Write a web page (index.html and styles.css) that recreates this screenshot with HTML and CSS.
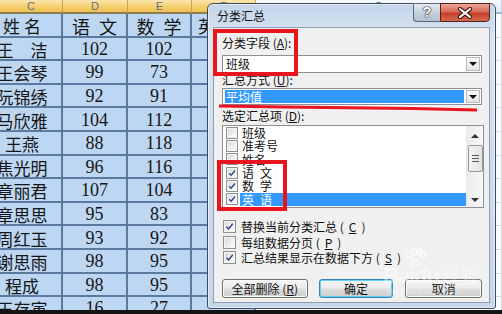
FILE: index.html
```html
<!DOCTYPE html>
<html>
<head>
<meta charset="utf-8">
<link rel="stylesheet" href="styles.css">
</head>
<body>
<div class="screen">
  <div class="sheet">
    <div class="hd">C</div><div class="hd">D</div><div class="hd">E</div><div class="hd">F</div><div class="hd g">G</div>

    <div class="c n head">姓名</div><div class="c">语&ensp;文</div><div class="c">数&ensp;学</div><div class="c f">英&ensp;语</div><div class="c g"></div>
    <div class="c n">王　洁</div><div class="c">102</div><div class="c">102</div><div class="c f"></div><div class="c g"></div>
    <div class="c n">王会琴</div><div class="c">99</div><div class="c">73</div><div class="c f"></div><div class="c g"></div>
    <div class="c n">阮锦绣</div><div class="c">92</div><div class="c">91</div><div class="c f"></div><div class="c g"></div>
    <div class="c n">马欣雅</div><div class="c">104</div><div class="c">112</div><div class="c f"></div><div class="c g"></div>
    <div class="c n">王燕</div><div class="c">88</div><div class="c">118</div><div class="c f"></div><div class="c g"></div>
    <div class="c n">焦光明</div><div class="c">96</div><div class="c">116</div><div class="c f"></div><div class="c g"></div>
    <div class="c n">章丽君</div><div class="c">107</div><div class="c">104</div><div class="c f"></div><div class="c g"></div>
    <div class="c n">章思思</div><div class="c">95</div><div class="c">83</div><div class="c f"></div><div class="c g"></div>
    <div class="c n">周红玉</div><div class="c">93</div><div class="c">92</div><div class="c f"></div><div class="c g"></div>
    <div class="c n">谢思雨</div><div class="c">98</div><div class="c">95</div><div class="c f"></div><div class="c g"></div>
    <div class="c n">程成</div><div class="c">98</div><div class="c">95</div><div class="c f"></div><div class="c g"></div>
    <div class="c n">王存寅</div><div class="c">16</div><div class="c">27</div><div class="c f"></div><div class="c g"></div>
  </div>

  <div class="dialog">
    <div class="titlebar">分类汇总</div>
    <div class="tb-help">?</div>
    <div class="tb-close">
      <svg width="16" height="12" viewBox="0 0 16 12"><path d="M3 2 L13 10 M13 2 L3 10" stroke="#3a1a14" stroke-width="4.2" stroke-linecap="round"/><path d="M3 2 L13 10 M13 2 L3 10" stroke="#ffffff" stroke-width="2.2" stroke-linecap="round"/></svg>
    </div>

    <div class="client">
      <div class="lbl">分类字段 (<u>A</u>):</div>
      <div class="combo">
        <span class="val">班级</span>
        <span class="dd"><i></i></span>
      </div>
      <div class="lbl l2">汇总方式 (<u>U</u>):</div>
      <div class="combo c2">
        <span class="val sel">平均值</span>
        <span class="dd"><i></i></span>
      </div>
      <div class="lbl l3">选定汇总项 (<u>D</u>):</div>
      <div class="listbox">
        <div class="items">
          <div class="it"><span class="cb"></span><span class="tx">班级</span></div>
          <div class="it"><span class="cb"></span><span class="tx">准考号</span></div>
          <div class="it"><span class="cb"></span><span class="tx">姓名</span></div>
          <div class="it"><span class="cb on"><svg viewBox="0 0 12 12"><path d="M2.6 6.2 L5 8.6 L9.6 3" stroke="#2f4a8a" stroke-width="1.7" fill="none"/></svg></span><span class="tx">语&ensp;文</span></div>
          <div class="it"><span class="cb on"><svg viewBox="0 0 12 12"><path d="M2.6 6.2 L5 8.6 L9.6 3" stroke="#2f4a8a" stroke-width="1.7" fill="none"/></svg></span><span class="tx">数&ensp;学</span></div>
          <div class="it"><span class="cb on"><svg viewBox="0 0 12 12"><path d="M2.6 6.2 L5 8.6 L9.6 3" stroke="#2f4a8a" stroke-width="1.7" fill="none"/></svg></span><span class="tx hi">英&ensp;语</span></div>
        </div>
        <div class="scroll">
          <span class="arr up"></span>
          <span class="thumb"><b></b><b></b><b></b></span>
          <span class="arr down"></span>
        </div>
      </div>

      <div class="checks">
        <div class="chk"><span class="cb big on"><svg viewBox="0 0 12 12"><path d="M2.6 6.2 L5 8.6 L9.6 3" stroke="#2f4a8a" stroke-width="1.7" fill="none"/></svg></span>替换当前分类汇总 (<u>C</u>)</div>
        <div class="chk"><span class="cb big"></span>每组数据分页 (<u>P</u>)</div>
        <div class="chk"><span class="cb big on"><svg viewBox="0 0 12 12"><path d="M2.6 6.2 L5 8.6 L9.6 3" stroke="#2f4a8a" stroke-width="1.7" fill="none"/></svg></span>汇总结果显示在数据下方 (<u>S</u>)</div>
      </div>

      <div class="buttons">
        <div class="btn b1">全部删除 (<u>R</u>)</div>
        <div class="btn b2">确定</div>
        <div class="btn b3">取消</div>
      </div>
    </div>

    <div class="mark box1"></div>
    <div class="mark box2"></div>
    <svg class="underline" width="289" height="12" viewBox="0 0 289 12"><polyline points="11,2 76,3 204,4.5 269,6" stroke="#e8141e" stroke-width="3" fill="none"/></svg>

    <div class="wm">
      <svg class="paw" width="22" height="20" viewBox="0 0 22 20"><g fill="none" stroke="rgba(255,255,255,0.5)" stroke-width="2"><ellipse cx="5" cy="7" rx="2.5" ry="3"/><ellipse cx="9" cy="3.5" rx="2.3" ry="2.8"/><ellipse cx="14" cy="3.5" rx="2.3" ry="2.8"/><ellipse cx="18" cy="7" rx="2.5" ry="3"/><path d="M6 16 Q11 8 16 16 Q11 19 6 16 Z"/></g></svg>
      <span class="wm-big">Bai</span><span class="wm-big">du</span><span class="wm-cn">经验</span>
      <div class="wm-url">jingyan.baidu.com</div>
    </div>
  </div>
</div>
</body>
</html>
```

FILE: styles.css
```css
* { box-sizing: border-box; margin: 0; padding: 0; }

html, body {
  width: 502px;
  height: 314px;
  overflow: hidden;
  background: #141414;
}

body {
  font-family: "Noto Sans CJK SC", sans-serif;
}

.screen {
  position: relative;
  width: 502px;
  height: 310px;
  overflow: hidden;
  background: #bdd7f3;
}

/* ---------- spreadsheet ---------- */
.sheet {
  display: grid;
  grid-template-columns: 63px 65px 64px 64px 1fr;
  grid-template-rows: 14px repeat(13, 23.6px);
}

.hd {
  background: linear-gradient(#fbe6ae, #f6cd6a 60%, #f1c050);
  border-right: 1px solid #c8a456;
  border-bottom: 2px solid #8c7d55;
  font: 11px/12px "Liberation Sans", sans-serif;
  color: #5d6f8a;
  text-align: center;
}

.hd.g {
  background: linear-gradient(#f6f9fc, #e4ecf7);
  border-right-color: #c5d2e3;
  border-bottom-color: #9eb6ce;
}

.c {
  display: flex;
  align-items: center;
  justify-content: center;
  padding-top: 2px;
  border-right: 2px solid #5a7a9f;
  border-bottom: 2px solid #5a7a9f;
  background: #bdd7f3;
  font: 18px "Liberation Serif", "Noto Sans CJK SC", serif;
  color: #151515;
  white-space: nowrap;
}

.c.n {
  padding-right: 17px;
  font-family: "Noto Sans CJK SC", sans-serif;
  font-size: 17px;
}

.c.n.head {
  padding-right: 13px;
  letter-spacing: 4px;
}

.c.f {
  justify-content: flex-start;
  padding-left: 6px;
  font-family: "Noto Sans CJK SC", sans-serif;
  font-size: 17px;
}

.c.g {
  background: #ffffff;
  border-right: 1px solid #d0d7e5;
  border-bottom: 1px solid #d0d7e5;
}

/* ---------- dialog ---------- */
.dialog {
  position: absolute;
  left: 207px;
  top: 3px;
  width: 289px;
  height: 306px;
  display: flex;
  flex-direction: column;
  padding: 0 5px 5px;
  border: 1px solid #3e4b5c;
  border-radius: 6px 6px 3px 3px;
  background: linear-gradient(#c4d5e9, #d9e5f2 12%, #cddcec 50%, #c6d7ea);
  box-shadow: 0 0 0 1px rgba(255,255,255,0.5) inset;
}

.titlebar {
  height: 23px;
  padding-left: 4px;
  display: flex;
  align-items: center;
  font-size: 12px;
  color: #111;
}

.tb-help {
  position: absolute;
  left: 205px;
  top: -1px;
  width: 27px;
  height: 19px;
  border: 1px solid #5b6676;
  border-right: none;
  border-radius: 0 0 0 4px;
  background: linear-gradient(#e6ebf1, #c7d1dd 50%, #b4c0ce);
  color: #fff;
  font: bold 14px/17px "Liberation Sans", sans-serif;
  text-align: center;
  text-shadow: 0 0 1px #223, 0 0 1px #223, 0 0 2px #334;
}

.tb-close {
  position: absolute;
  left: 232px;
  top: -1px;
  width: 50px;
  height: 19px;
  border: 1px solid #56221a;
  border-radius: 0 0 4px 0;
  background: linear-gradient(#eca79a, #d66a58 45%, #c5402c 55%, #d46a50);
  display: flex;
  align-items: center;
  justify-content: center;
}

.client {
  flex: 1;
  background: #f0f0f0;
  border: 1px solid #8d9db2;
  padding: 9px 7px 0 8px;
  font-size: 12px;
  color: #111;
}

.lbl {
  height: 12px;
  line-height: 12px;
  font-size: 12px;
  white-space: nowrap;
}

.l2 { margin-top: 1px; }
.l3 { margin-top: 5px; }

.combo {
  margin-top: 6px;
  width: 260px;
  height: 18px;
  display: flex;
  align-items: center;
  padding: 1px 1px 1px 2px;
  border: 1px solid #8c8f95;
  background: #fff;
}

.combo.c2 {
  margin-top: 2px;
  height: 17px;
}

.combo .val {
  flex: 1;
  height: 100%;
  display: flex;
  align-items: center;
  padding-left: 1px;
  line-height: 12px;
}

.combo .val.sel {
  background: #3399ff;
  color: #fff;
  margin-right: 2px;
}

.combo .dd {
  width: 14px;
  height: 100%;
  border: 1px solid #b9b9b9;
  background: linear-gradient(#fafafa, #e4e4e4);
  display: flex;
  align-items: center;
  justify-content: center;
}

.combo .dd i {
  width: 0;
  height: 0;
  border-left: 4px solid transparent;
  border-right: 4px solid transparent;
  border-top: 4px solid #111;
}

.listbox {
  margin-top: 3px;
  width: 262px;
  height: 83px;
  display: flex;
  border: 1px solid #8c8f95;
  background: #fff;
}

.items {
  flex: 1;
}

.it {
  height: 13.3px;
  display: flex;
  align-items: center;
  padding-left: 3px;
}

.cb {
  width: 12px;
  height: 12px;
  flex: none;
  border: 1px solid #8e8f8f;
  background: linear-gradient(135deg, #d6d6d6, #f5f5f5 70%, #fff);
  box-shadow: inset 0 0 0 1px #f4f4f4;
  display: flex;
}

.cb svg { width: 100%; height: 100%; }

.it .tx {
  flex: 1;
  height: 13px;
  margin-left: 2px;
  padding-left: 2px;
  line-height: 13px;
  white-space: nowrap;
}

.it .tx.hi {
  background: #3399ff;
  color: #fff;
}

.scroll {
  width: 17px;
  height: 100%;
  display: flex;
  flex-direction: column;
  align-items: center;
  background: linear-gradient(90deg, #ececec, #f8f8f8);
  border-left: 1px solid #e6e6e6;
}

.arr {
  width: 0;
  height: 0;
  border-left: 4px solid transparent;
  border-right: 4px solid transparent;
}

.arr.up {
  margin-top: 8px;
  border-bottom: 4px solid #333;
}

.arr.down {
  margin-top: auto;
  margin-bottom: 5px;
  border-top: 4px solid #333;
}

.thumb {
  margin-top: 7px;
  width: 15px;
  height: 27px;
  border: 1px solid #989898;
  border-radius: 2px;
  background: linear-gradient(90deg, #f2f2f2, #e2e2e2);
  display: flex;
  flex-direction: column;
  align-items: center;
  justify-content: center;
  gap: 2px;
}

.thumb b {
  width: 7px;
  height: 1px;
  background: #5a5a5a;
}

.checks {
  margin-top: 11px;
}

.chk {
  height: 15.5px;
  display: flex;
  align-items: center;
  gap: 5px;
  padding-left: 1px;
  font-size: 12px;
  white-space: nowrap;
}

.cb.big {
  width: 13px;
  height: 13px;
}

.buttons {
  margin-top: 13px;
  display: flex;
}

.btn {
  height: 19px;
  display: flex;
  align-items: center;
  justify-content: center;
  border: 1px solid #707070;
  border-radius: 3px;
  background: linear-gradient(#f4f4f4, #ebebeb 48%, #dddddd 52%, #cfcfcf);
  box-shadow: inset 0 0 0 1px #fbfbfb;
  font-size: 12px;
  white-space: nowrap;
}

.b1 { width: 86px; }
.b2 {
  width: 75px;
  margin-left: 11px;
  border-color: #3c7fb1;
  box-shadow: inset 0 0 0 1px #5fd0f8;
}
.b3 { width: 77px; margin-left: 12px; }

/* ---------- annotation overlays ---------- */
.mark {
  position: absolute;
  border: 4px solid #e8141e;
}

.box1 {
  left: 5px;
  top: 25px;
  width: 85px;
  height: 47px;
}

.box2 {
  left: 9px;
  top: 156px;
  width: 70px;
  height: 51px;
}

.underline {
  position: absolute;
  left: 0;
  top: 100px;
}

.wm {
  position: absolute;
  left: 175px;
  top: 258px;
  color: rgba(255,255,255,0.45);
  font-family: "Liberation Sans", sans-serif;
  white-space: nowrap;
}

.paw {
  position: absolute;
  left: 22px;
  top: -14px;
}

.wm-big {
  font-size: 22px;
  font-weight: bold;
  letter-spacing: -1px;
}

.wm-cn {
  font-family: "Noto Sans CJK SC", sans-serif;
  font-size: 18px;
  margin-left: 3px;
}

.wm-url {
  font-size: 9px;
  margin-top: -3px;
  margin-left: 4px;
  color: rgba(255,255,255,0.4);
}
```
